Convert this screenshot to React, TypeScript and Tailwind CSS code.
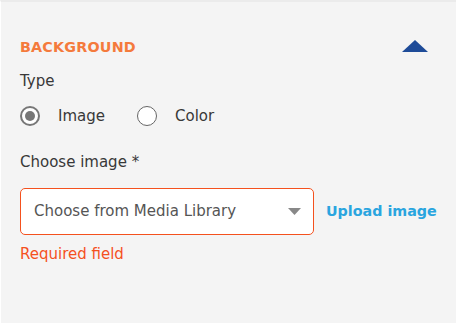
import React from "react";

export default function App() {
  return (
    <div className="w-[456px] h-[323px] bg-[#f4f4f4] border-t-2 border-[#ebebeb] border-l border-l-white relative overflow-hidden" style={{ fontFamily: '"DejaVu Sans", sans-serif' }}>
      <div className="pl-[19px] pr-[12px] pt-[35px]">
        <div className="flex items-center justify-between h-[20px]">
          <span className="text-[14.3px] font-bold text-[#f47a3c] tracking-[0.2px] leading-none">BACKGROUND</span>
          <svg width="26" height="13" viewBox="0 0 26 13" className="mr-[16px] mt-[-2px]">
            <polygon points="13,0 26,12 0,12" fill="#1e4b98" />
          </svg>
        </div>
        <div className="mt-[14px] text-[15px] text-[#383838] leading-[20px]">Type</div>
        <div className="mt-[14px] flex items-center h-[22px] text-[15px] text-[#383838]">
          <span className="w-[20px] h-[20px] rounded-full border-2 border-[#777] bg-white flex items-center justify-center">
            <span className="w-[10px] h-[10px] rounded-full bg-[#777]" />
          </span>
          <span className="ml-[18px]">Image</span>
          <span className="ml-[32px] w-[20px] h-[20px] rounded-full border border-[#666] bg-white" />
          <span className="ml-[18px]">Color</span>
        </div>
        <div className="mt-[25px] text-[15px] text-[#383838] leading-[20px]">Choose image *</div>
        <div className="mt-[16px] flex items-center">
          <div className="w-[294px] shrink-0 h-[47px] bg-white border border-[#f4511e] rounded-[5px] flex items-center justify-between pl-[13px] pr-[12px]">
            <span className="text-[15px] text-[#555]">Choose from Media Library</span>
            <svg width="13" height="7" viewBox="0 0 13 7"><polygon points="0,0 13,0 6.5,7" fill="#888" /></svg>
          </div>
          <span className="ml-[12px] whitespace-nowrap text-[14.3px] font-bold text-[#2aa5df]">Upload image</span>
        </div>
        <div className="mt-[9px] text-[15px] text-[#f4511e] leading-[20px]">Required field</div>
      </div>
    </div>
  );
}
